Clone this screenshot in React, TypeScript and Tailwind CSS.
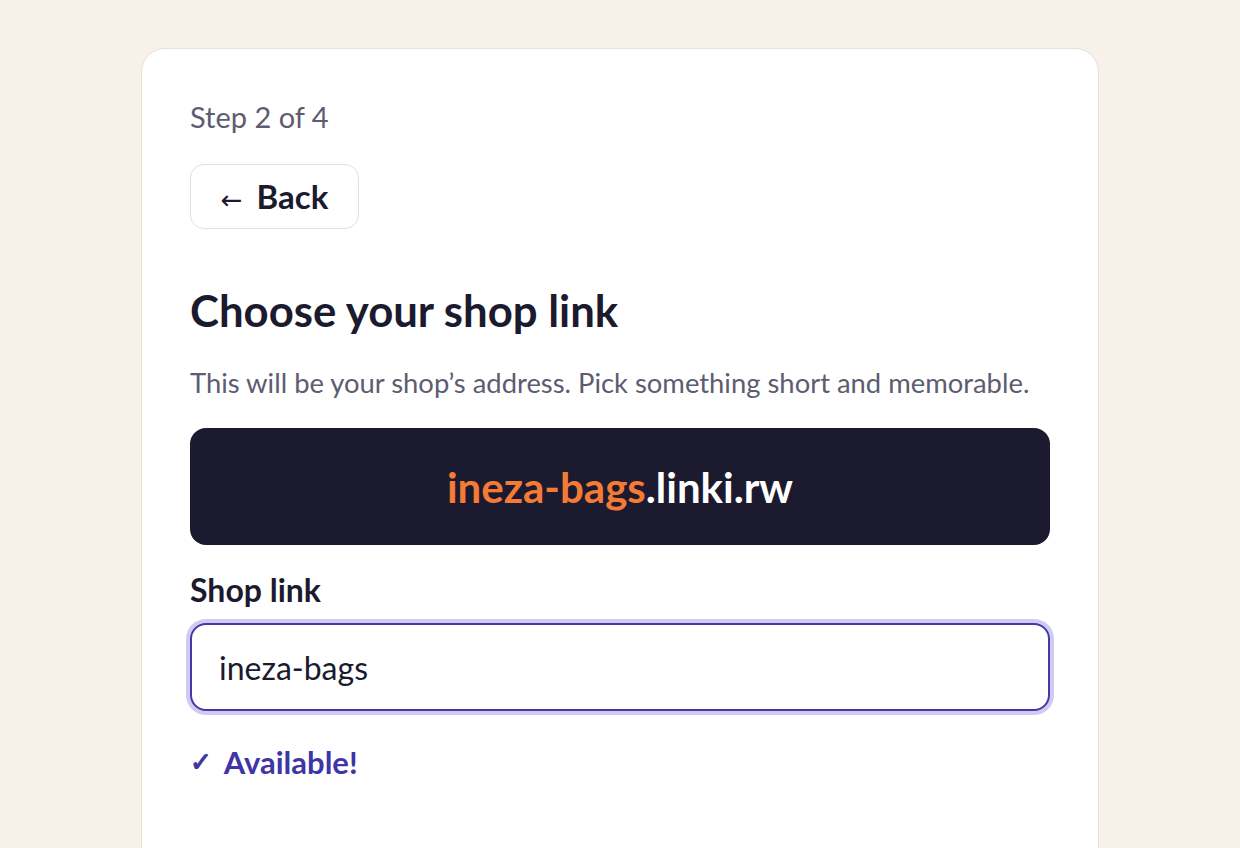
import React, { useState } from 'react';

const App: React.FC = () => {
  const [slug, setSlug] = useState('ineza-bags');

  return (
    <div
      className="min-h-screen bg-[#f8f1ea] overflow-hidden"
      style={{ fontFamily: 'Lato, "Noto Sans", sans-serif' }}
    >
      <div className="mx-auto mt-12 w-[958px] h-[900px] bg-white border border-[#e8e2d6] rounded-[24px] px-12 pt-[52px]">
        {/* Step indicator */}
        <div className="text-[29px] leading-[32px] text-[#5d5c70]">Step 2 of 4</div>

        <button className="mt-[31px] h-[65px] w-[169px] rounded-[14px] border-[1.5px] border-[#e4e1d3] bg-white flex items-center justify-center gap-[14px] text-[#1b1a2e]">
          <span className="text-[26px] leading-none mt-[6px]" style={{ fontFamily: '"DejaVu Sans", sans-serif' }}>←</span>
          <span className="text-[33px] font-bold leading-none">Back</span>
        </button>

        <h1 className="mt-[59px] text-[43.7px] leading-[44px] font-bold text-[#1b1a2e]">Choose your shop link</h1>
        <p className="mt-[35px] text-[27.4px] leading-[32px] text-[#5d5c70]">
          This will be your shop’s address. Pick something short and memorable.
        </p>

        {/* Link preview */}
        <div className="mt-[29px] h-[117px] rounded-[16px] bg-[#1c1a2f] flex items-center justify-center">
          <span className="text-[42px] leading-none font-bold">
            <span className="text-[#f47b35]">{slug || 'your-shop'}</span>
            <span className="text-white">.linki.rw</span>
          </span>
        </div>

        <label className="block mt-[29px] text-[32px] leading-[32px] font-bold text-[#1b1a2e]">Shop link</label>
        <input
          value={slug}
          onChange={(e) => setSlug(e.target.value)}
          className="mt-[17px] block w-full h-[88px] rounded-[16px] border-2 border-[#4339a8] bg-white px-[27px] text-[32px] text-[#1b1a2e] outline-none ring-4 ring-[#cfcbf2]"
        />

        <div className="mt-[35px] text-[31px] leading-[32px] font-bold text-[#3f35a6] flex items-center gap-[12px]">
          <span
            className="text-[26px] leading-none"
            style={{ fontFamily: '"DejaVu Sans", sans-serif', WebkitTextStroke: '1.2px #3f35a6' }}
          >
            ✓
          </span>
          <span>Available!</span>
        </div>
      </div>
    </div>
  );
};

export default App;
